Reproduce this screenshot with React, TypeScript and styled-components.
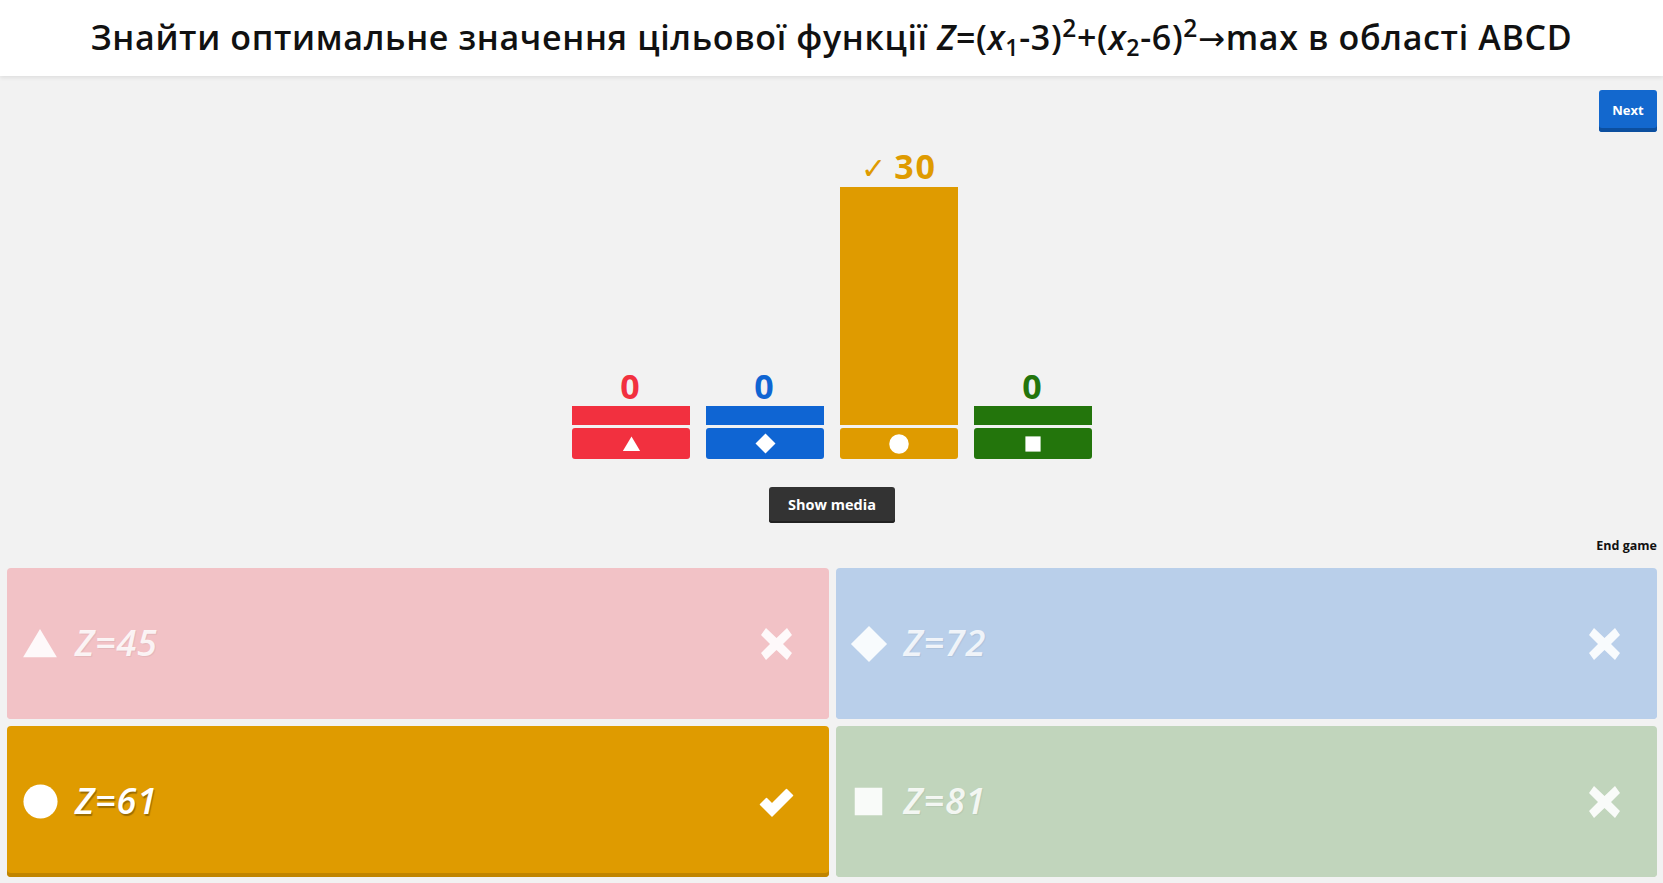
import React from "react";
import styled, { createGlobalStyle } from "styled-components";

const GlobalStyle = createGlobalStyle`
  html, body { margin: 0; padding: 0; }
  body {
    background: #f2f2f2;
    font-family: "Open Sans", "Noto Sans", Arial, sans-serif;
    overflow: hidden;
  }
`;

const Page = styled.div`
  width: 1663px;
  height: 883px;
  display: flex;
  flex-direction: column;
  background: #f2f2f2;
`;

const Header = styled.header`
  height: 76px;
  flex: 0 0 76px;
  background: #ffffff;
  box-shadow: 0 2px 4px rgba(0, 0, 0, 0.08);
  display: flex;
  align-items: center;
  justify-content: center;
  position: relative;
  z-index: 1;
`;

const Title = styled.h1`
  margin: 0 0 2px;
  font-family: "Open Sans", "Noto Sans", sans-serif;
  font-weight: 600;
  font-size: 34px;
  letter-spacing: 0.65px;
  color: #111;
  white-space: nowrap;
  i { font-style: italic; }
  sub { font-size: 0.68em; vertical-align: -0.28em; line-height: 0; }
  sup { font-size: 0.72em; vertical-align: 0.55em; line-height: 0; }
`;

const Arrow = styled.span`
  font-family: "DejaVu Sans", sans-serif;
  font-weight: 400;
  font-size: 0.95em;
`;

const Main = styled.main`
  display: flex;
  flex-direction: column;
  padding: 14px 6px 0 7px;
`;

const TopRow = styled.div`
  height: 42px;
  display: flex;
  justify-content: flex-end;
`;

const NextButton = styled.button`
  width: 58px;
  height: 42px;
  border: none;
  border-radius: 3px;
  background: #1368ce;
  box-shadow: inset 0 -4px 0 #0c4f9f;
  color: #fff;
  font-family: "Open Sans", sans-serif;
  font-weight: 700;
  font-size: 13px;
  padding: 0 0 3px;
  cursor: pointer;
`;

const Chart = styled.div`
  height: 327px;
  display: flex;
  justify-content: center;
  align-items: flex-end;
  gap: 16px;
`;

const Column = styled.div`
  width: 118px;
  display: flex;
  flex-direction: column;
  align-items: stretch;
`;

const Count = styled.div<{ $color: string; $gap: number }>`
  color: ${(p) => p.$color};
  font-family: "Open Sans", sans-serif;
  font-weight: 700;
  font-size: 34px;
  line-height: 33px;
  letter-spacing: 2px;
  text-align: center;
  margin-bottom: ${(p) => p.$gap}px;
  display: flex;
  justify-content: center;
  align-items: baseline;
  gap: 8px;
`;

const Tick = styled.span`
  font-family: "DejaVu Sans", sans-serif;
  font-weight: 700;
  font-size: 30px;
  letter-spacing: 0;
`;

const ScoreBar = styled.div<{ $color: string }>`
  background: ${(p) => p.$color};
`;

const Base = styled.div<{ $color: string }>`
  margin-top: 3px;
  height: 31px;
  border-radius: 3px;
  background: ${(p) => p.$color};
  display: flex;
  align-items: center;
  justify-content: center;
`;

const MediaRow = styled.div`
  margin-top: 28px;
  display: flex;
  justify-content: center;
`;

const ShowMedia = styled.button`
  width: 126px;
  height: 36px;
  border: none;
  border-radius: 3px;
  background: #333333;
  box-shadow: inset 0 -2px 0 #222;
  color: #fff;
  font-family: "Open Sans", sans-serif;
  font-weight: 700;
  font-size: 14.5px;
  padding: 0 0 2px;
`;

const EndRow = styled.div`
  margin-top: 15px;
  height: 15px;
  display: flex;
  justify-content: flex-end;
`;

const EndGame = styled.span`
  font-family: "Open Sans", sans-serif;
  font-weight: 700;
  font-size: 12.5px;
  line-height: 15px;
  color: #111;
`;

const Answers = styled.section`
  margin-top: 15px;
  padding: 0 6px 6px 7px;
  display: grid;
  grid-template-columns: 1fr 1fr;
  grid-template-rows: 151px 151px;
  gap: 7px;
`;

const Card = styled.div<{ $bg: string; $edge: string }>`
  background: ${(p) => p.$bg};
  border-radius: 4px;
  box-shadow: inset 0 -4px 0 ${(p) => p.$edge};
  display: flex;
  align-items: center;
  padding: 0 35px 0 14px;
`;

const ShapeBox = styled.div`
  width: 38px;
  height: 40px;
  display: flex;
  align-items: center;
  justify-content: center;
  flex: 0 0 38px;
`;

const AnswerText = styled.div<{ $color: string; $shadow: string }>`
  flex: 1;
  margin-left: 16px;
  font-family: "Open Sans", sans-serif;
  font-style: italic;
  font-weight: 600;
  font-size: 36px;
  letter-spacing: 0.8px;
  color: ${(p) => p.$color};
  text-shadow: ${(p) => p.$shadow};
  padding-bottom: 2px;
`;

const StatusBox = styled.div`
  width: 35px;
  height: 34px;
  display: flex;
  align-items: center;
  justify-content: center;
`;

type ShapeKind = "triangle" | "diamond" | "circle" | "square";

const Shape: React.FC<{ kind: ShapeKind; size: number; color: string }> = ({ kind, size, color }) => {
  if (kind === "triangle")
    return (
      <svg width={size} height={size * 0.84} viewBox="0 0 40 34">
        <polygon points="20,1 39,33 1,33" fill={color} />
      </svg>
    );
  if (kind === "diamond")
    return (
      <svg width={size} height={size} viewBox="0 0 40 40">
        <polygon points="20,1 39,20 20,39 1,20" fill={color} />
      </svg>
    );
  if (kind === "circle")
    return (
      <svg width={size} height={size} viewBox="0 0 40 40">
        <circle cx="20" cy="20" r="19.5" fill={color} />
      </svg>
    );
  return (
    <svg width={size} height={size} viewBox="0 0 40 40">
      <rect x="1" y="1" width="38" height="38" fill={color} />
    </svg>
  );
};

const CrossIcon: React.FC<{ color: string }> = ({ color }) => (
  <svg width="33" height="32" viewBox="0 0 33 32">
    <polygon
      points="1,7 6,0 16.5,10 27,0 32,7 23,16 32,25 27,32 16.5,22 6,32 1,25 10,16"
      fill={color}
    />
  </svg>
);

const CheckIcon: React.FC<{ color: string }> = ({ color }) => (
  <svg width="35" height="30" viewBox="0 0 35 30">
    <path
      d="M1.5 17.5 L7.5 11.5 L13 17 L27.5 2.5 L33.5 8.5 L13 29 Z"
      fill={color}
      stroke={color}
      strokeWidth="1.5"
      strokeLinejoin="round"
    />
  </svg>
);

const bars = [
  { kind: "triangle" as ShapeKind, color: "#f2303f", value: 0, height: 19, iconSize: 19 },
  { kind: "diamond" as ShapeKind, color: "#0f65d3", value: 0, height: 19, iconSize: 21 },
  { kind: "circle" as ShapeKind, color: "#df9b00", value: 30, height: 238, iconSize: 20, correct: true },
  { kind: "square" as ShapeKind, color: "#23750c", value: 0, height: 19, iconSize: 16 },
];

const answers = [
  { kind: "triangle" as ShapeKind, text: "Z=45", bg: "#f2c2c6", edge: "#eab8bd", shape: 36, correct: false, fg: "rgba(255,255,255,0.85)" },
  { kind: "diamond" as ShapeKind, text: "Z=72", bg: "#b9cfea", edge: "#afc6e3", shape: 38, correct: false, fg: "rgba(255,255,255,0.82)" },
  { kind: "circle" as ShapeKind, text: "Z=61", bg: "#df9b00", edge: "#c08500", shape: 35, correct: true, fg: "#ffffff" },
  { kind: "square" as ShapeKind, text: "Z=81", bg: "#c1d5bc", edge: "#b7ccb2", shape: 29, correct: false, fg: "rgba(255,255,255,0.85)" },
];

export default function App() {
  return (
    <Page>
      <GlobalStyle />
      <Header>
        <Title>
          Знайти оптимальне значення цільової функції <i>Z</i>=(<i>x</i>
          <sub>1</sub>-3)<sup>2</sup>+(<i>x</i>
          <sub>2</sub>-6)<sup>2</sup>
          <Arrow>→</Arrow>max в області ABCD
        </Title>
      </Header>
      <Main>
        <TopRow>
          <NextButton>Next</NextButton>
        </TopRow>
        <Chart>
          {bars.map((b, i) => (
            <Column key={i}>
              <Count $color={b.color} $gap={b.correct ? 2 : 3}>
                {b.correct && <Tick>✓</Tick>}
                <span>{b.value}</span>
              </Count>
              <ScoreBar $color={b.color} style={{ height: b.height }} />
              <Base $color={b.color}>
                <Shape kind={b.kind} size={b.iconSize} color="#ffffff" />
              </Base>
            </Column>
          ))}
        </Chart>
        <MediaRow>
          <ShowMedia>Show media</ShowMedia>
        </MediaRow>
        <EndRow>
          <EndGame>End game</EndGame>
        </EndRow>
      </Main>
      <Answers>
        {answers.map((a, i) => (
          <Card key={i} $bg={a.bg} $edge={a.correct ? a.edge : a.bg}>
            <ShapeBox>
              <Shape kind={a.kind} size={a.shape} color={a.correct ? "#ffffff" : "rgba(255,255,255,0.9)"} />
            </ShapeBox>
            <AnswerText
              $color={a.fg}
              $shadow={a.correct ? "1px 2px 1px rgba(0,0,0,0.3)" : "1px 1px 1px rgba(0,0,0,0.06)"}
            >
              {a.text}
            </AnswerText>
            <StatusBox>
              {a.correct ? <CheckIcon color="#ffffff" /> : <CrossIcon color="rgba(255,255,255,0.9)" />}
            </StatusBox>
          </Card>
        ))}
      </Answers>
    </Page>
  );
}
